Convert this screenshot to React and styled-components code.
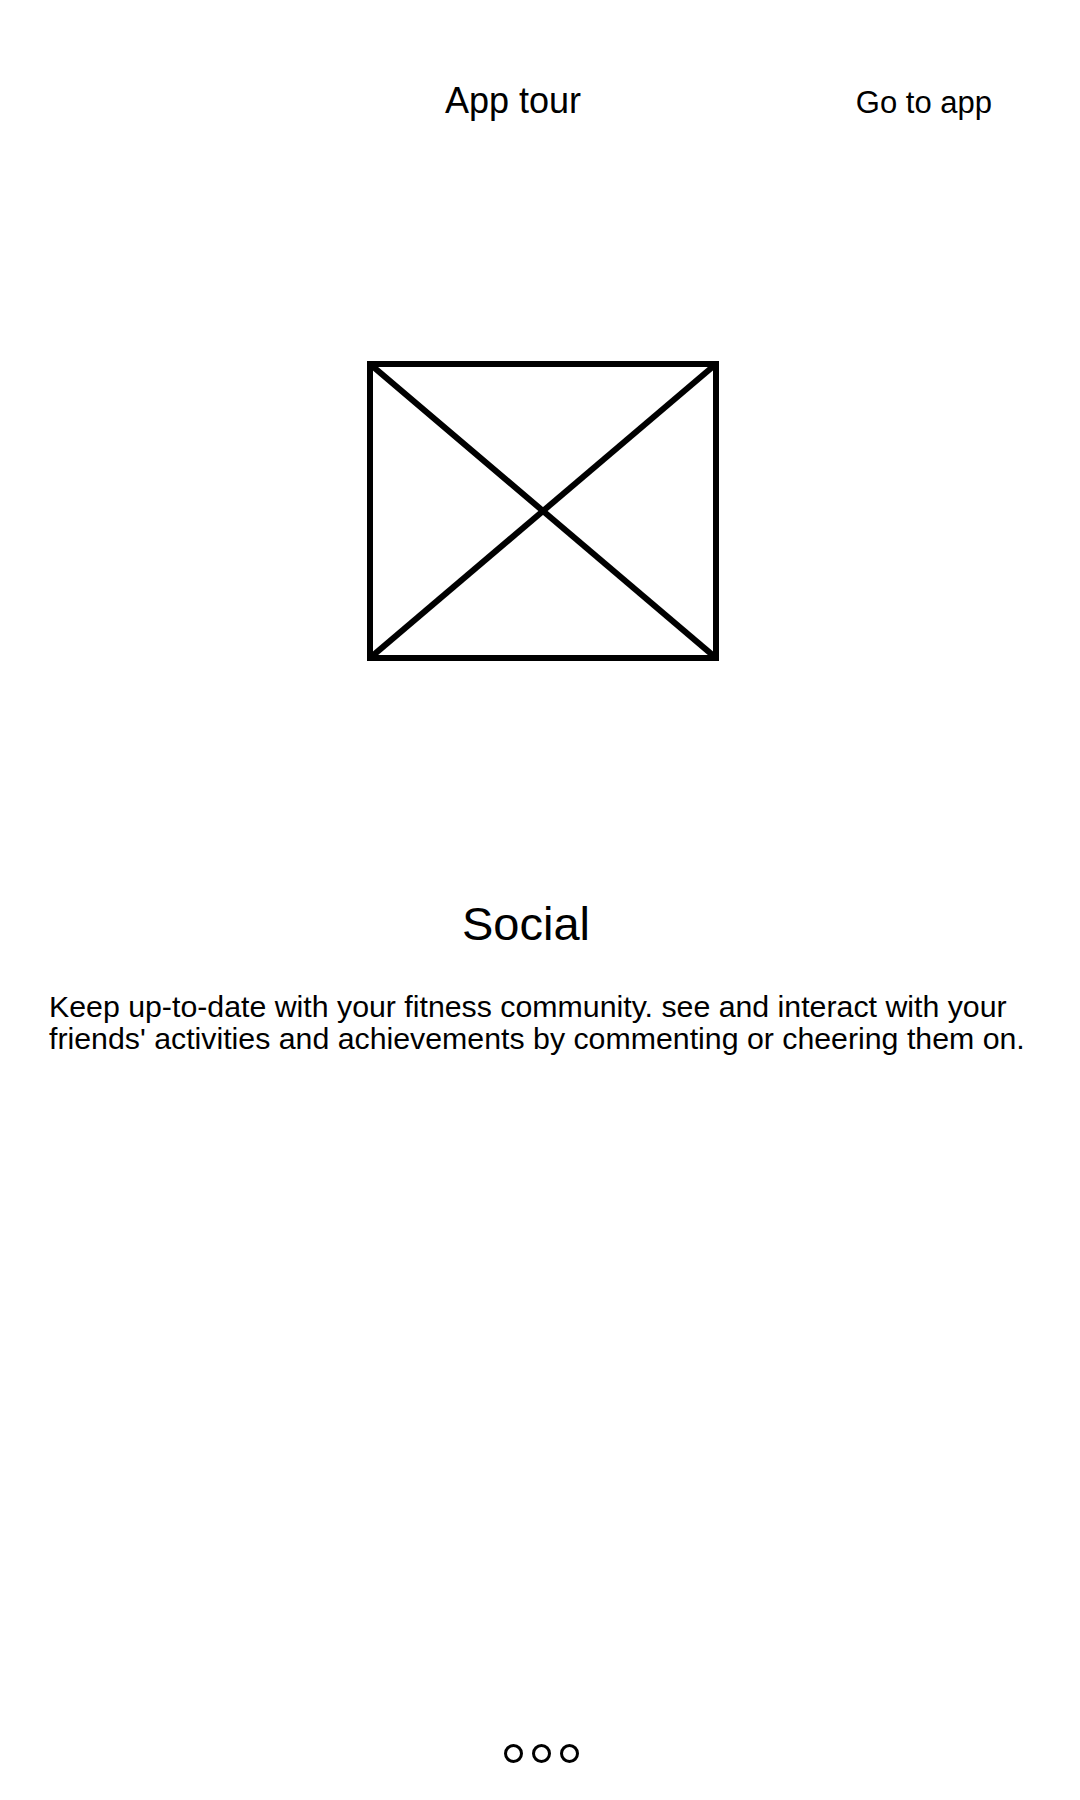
import React from "react";
import styled, { createGlobalStyle } from "styled-components";

const GlobalStyle = createGlobalStyle`
  html, body {
    margin: 0;
    padding: 0;
    background: #ffffff;
  }
  body {
    font-family: "Liberation Sans", Arial, sans-serif;
    color: #000000;
  }
`;

const Screen = styled.div`
  box-sizing: border-box;
  width: 1080px;
  min-height: 1800px;
  display: flex;
  flex-direction: column;
  background: #ffffff;
`;

const Header = styled.header`
  display: flex;
  align-items: baseline;
  justify-content: space-between;
  padding: 80px 88px 0 445px;
`;

const Title = styled.h1`
  margin: 0;
  font-size: 36px;
  font-weight: 400;
  line-height: normal;
`;

const SkipLink = styled.a`
  font-size: 31px;
  color: #000000;
  text-decoration: none;
  line-height: normal;
  cursor: pointer;
`;

const ImageSlot = styled.div`
  display: flex;
  justify-content: center;
  margin-top: 239px;
  padding-left: 6px;
`;

const Slide = styled.section`
  display: flex;
  flex-direction: column;
  margin-top: 235px;
`;

const SlideHeading = styled.h2`
  margin: 0;
  align-self: flex-start;
  margin-left: 462px;
  font-size: 47px;
  font-weight: 400;
  line-height: normal;
`;

const SlideText = styled.p`
  margin: 40px 0 0;
  padding: 0 44px 0 49px;
  font-size: 30.3px;
  line-height: 32px;
`;

const Pager = styled.div`
  display: flex;
  justify-content: center;
  gap: 9px;
  margin-top: auto;
  padding: 0 0 37px 2px;
`;

const Dot = styled.span`
  box-sizing: border-box;
  width: 19px;
  height: 19px;
  border-radius: 50%;
  border: 3px solid #000000;
  background: ${(p) => (p.$active ? "#000000" : "transparent")};
`;

function PlaceholderImage() {
  return (
    <svg width="352" height="300" viewBox="0 0 352 300" aria-hidden="true">
      <g stroke="#000" strokeWidth="6" fill="none" strokeLinecap="square">
        <rect x="3" y="3" width="346" height="294" />
        <line x1="3" y1="3" x2="349" y2="297" />
        <line x1="349" y1="3" x2="3" y2="297" />
      </g>
    </svg>
  );
}

export default function App() {
  return (
    <>
      <GlobalStyle />
      <Screen>
        <Header>
          <Title>App tour</Title>
          <SkipLink>Go to app</SkipLink>
        </Header>
        <ImageSlot>
          <PlaceholderImage />
        </ImageSlot>
        <Slide>
          <SlideHeading>Social</SlideHeading>
          <SlideText>
            Keep up-to-date with your fitness community. see and interact with
            your friends' activities and achievements by commenting or cheering
            them on.
          </SlideText>
        </Slide>
        <Pager>
          <Dot />
          <Dot />
          <Dot />
        </Pager>
      </Screen>
    </>
  );
}
